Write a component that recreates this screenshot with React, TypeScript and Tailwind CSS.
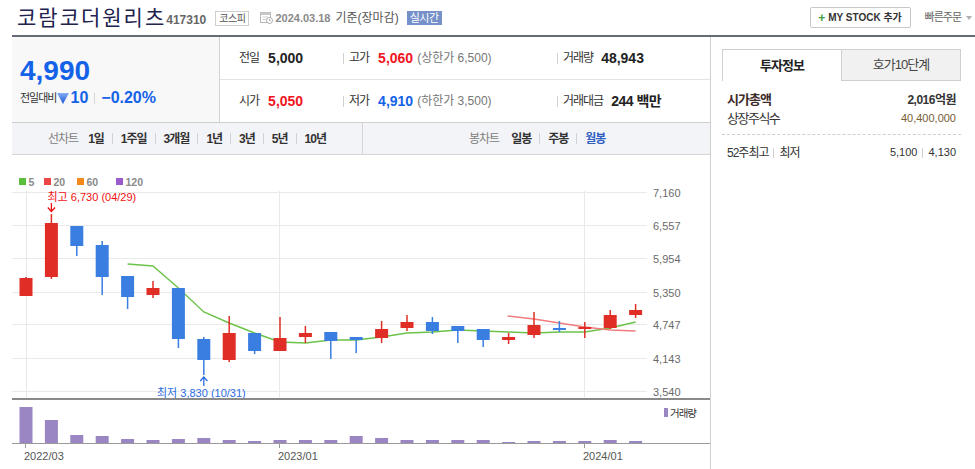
import { Fragment } from 'react';

const candles: [number, number, number, number, boolean][] = [
  // wickTop, bodyTop, bodyBottom, wickBottom, up
  [277, 278, 296, 296, true],
  [214, 223, 277, 279, true],
  [226, 226, 246, 256, false],
  [241, 245, 277, 295, false],
  [276, 276, 297, 309, false],
  [281, 288, 295, 298, true],
  [288, 288, 339, 348, false],
  [337, 339, 360, 375, false],
  [316, 333, 360, 362, true],
  [333, 333, 351, 354, false],
  [317, 338, 351, 351, true],
  [326, 333, 337, 343, true],
  [332, 332, 341, 359, false],
  [337, 337, 340, 353, false],
  [321, 329, 338, 343, true],
  [315, 322, 328, 331, true],
  [317, 322, 331, 334, false],
  [326, 326, 331, 343, false],
  [329, 329, 340, 347, false],
  [333, 337, 340, 344, true],
  [312, 325, 335, 338, true],
  [321, 328, 330, 332, false],
  [322, 327, 329, 338, true],
  [310, 315, 328, 329, true],
  [304, 310, 315, 318, true],
];

const volumes = [407, 420, 435, 436, 439, 440, 439, 438, 440, 441, 440, 440, 440, 436, 438, 440, 440, 440, 440, 442, 441, 441, 441, 440, 441];

const ma5: [number, number][] = [
  [4, 264], [5, 266], [6, 288], [7, 312], [8, 323], [9, 333], [10, 342], [11, 343], [12, 340],
  [13, 340], [14, 337], [15, 333], [16, 332], [17, 330], [18, 331], [19, 332], [20, 333],
  [21, 332], [22, 332], [23, 328], [24, 322],
];

const ma20: [number, number][] = [[19, 316], [20, 319], [21, 323], [22, 327], [23, 330], [24, 331]];

const grid = [192, 225, 258, 292, 324, 358, 391];
const yLabels = ['7,160', '6,557', '5,954', '5,350', '4,747', '4,143', '3,540'];

const cx = (i: number) => 26 + 25.4 * i;

function CalendarIcon() {
  return (
    <svg width="13" height="13" viewBox="0 0 13 13" className="ml-[11px]">
      <rect x="0.5" y="1.5" width="10" height="10" fill="white" stroke="#b8b8b8" />
      <rect x="0.5" y="1.5" width="10" height="2.5" fill="#c8c8c8" />
      <line x1="2.5" y1="6" x2="8" y2="6" stroke="#cfcfcf" />
      <line x1="2.5" y1="8.5" x2="6" y2="8.5" stroke="#cfcfcf" />
      <circle cx="9.5" cy="9.5" r="3" fill="white" stroke="#a8a8a8" />
      <path d="M9.5 8 V9.6 H10.8" stroke="#a8a8a8" fill="none" strokeWidth="0.9" />
    </svg>
  );
}

function Header() {
  return (
    <div className="ml-[12px] h-[37px] border-b-2 border-[#656b74] flex items-center justify-between pl-[5px] pr-[3px]">
      <div className="flex items-center">
        <h1 className="text-[21px] leading-none text-[#22224f] font-normal tracking-[2px]">코람코더원리츠</h1>
        <span className="ml-[0px] mt-[5px] text-[12px] font-bold text-[#666]">417310</span>
        <span className="ml-[9px] mt-[1px] h-[15px] px-[3px] border border-[#cfcfcf] text-[10px] leading-[13px] text-[#555] tracking-[-0.5px]">코스피</span>
        <CalendarIcon />
        <span className="ml-[2px] mt-[1px] text-[11px] font-bold text-[#8a8a8a]">2024.03.18</span>
        <span className="ml-[5px] mt-[1px] text-[12px] text-[#555]">기준(장마감)</span>
        <span className="ml-[8px] mt-[1px] h-[14px] px-[3px] bg-[#7690c9] text-[11px] leading-[14px] text-white tracking-[-0.5px]">실시간</span>
      </div>
      <div className="flex items-center">
        <button className="h-[21px] w-[101px] border border-[#c8c8c8] rounded-[2px] bg-white flex items-center justify-center text-[10px] font-bold text-[#333]">
          <span className="text-[#3ca03c] text-[12px] mr-[3px] leading-none">+</span>
          MY STOCK 추가
        </button>
        <span className="ml-[14px] text-[11px] text-[#666] tracking-[-1px]">빠른주문</span>
        <svg width="6" height="4" viewBox="0 0 6 4" className="ml-[5px]">
          <path d="M0 0 H6 L3 4 Z" fill="#b0b0b0" />
        </svg>
      </div>
    </div>
  );
}

function Sep() {
  return <span className="w-px h-[11px] bg-[#d0d0d0]" />;
}

function Summary() {
  return (
    <div className="h-[86px] flex border-b border-[#cfcfcf]">
      <div className="w-[208px] bg-[#f8f8f8] border-r border-[#d2d2d2] pl-[8px] pt-[19px]">
        <div className="text-[28px] leading-[30px] font-bold text-[#1462e8]">4,990</div>
        <div className="mt-[2px] flex items-center h-[20px]">
          <span className="text-[11px] tracking-[-1px] text-[#333]">전일대비</span>
          <svg width="12" height="12" viewBox="0 0 12 12" className="ml-[1px]">
            <defs>
              <linearGradient id="dn" x1="0" y1="0" x2="0" y2="1">
                <stop offset="0" stopColor="#86aef2" />
                <stop offset="1" stopColor="#1655d8" />
              </linearGradient>
            </defs>
            <path d="M0 1 H12 L6 12 Z" fill="url(#dn)" />
          </svg>
          <span className="ml-[1px] text-[16px] font-bold text-[#1462e8]">10</span>
          <span className="mx-[6px] w-px h-[11px] bg-[#d8d8d8]" />
          <span className="text-[16px] font-bold text-[#1462e8]">−0.20%</span>
        </div>
      </div>
      <div className="flex-1 flex flex-col">
        <div className="h-[43px] flex items-center border-b border-[#e4e4e4]">
          <div className="w-[123px] pl-[19px] flex items-center">
            <span className="text-[12px] tracking-[-1px] text-[#333]">전일</span>
            <span className="ml-[9px] text-[14px] font-bold text-[#222]">5,000</span>
          </div>
          <div className="w-[214px] flex items-center">
            <Sep />
            <span className="ml-[5px] text-[12px] tracking-[-1px] text-[#333]">고가</span>
            <span className="ml-[9px] text-[14px] font-bold text-[#f0141e]">5,060</span>
            <span className="ml-[4px] text-[12px] text-[#777]">(상한가 6,500)</span>
          </div>
          <div className="flex-1 flex items-center">
            <Sep />
            <span className="ml-[5px] text-[12px] tracking-[-1px] text-[#333]">거래량</span>
            <span className="ml-[8px] text-[14px] font-bold text-[#222]">48,943</span>
          </div>
        </div>
        <div className="h-[42px] flex items-center">
          <div className="w-[123px] pl-[19px] flex items-center">
            <span className="text-[12px] tracking-[-1px] text-[#333]">시가</span>
            <span className="ml-[9px] text-[14px] font-bold text-[#f0141e]">5,050</span>
          </div>
          <div className="w-[214px] flex items-center">
            <Sep />
            <span className="ml-[5px] text-[12px] tracking-[-1px] text-[#333]">저가</span>
            <span className="ml-[9px] text-[14px] font-bold text-[#1462e8]">4,910</span>
            <span className="ml-[4px] text-[12px] text-[#777]">(하한가 3,500)</span>
          </div>
          <div className="flex-1 flex items-center">
            <Sep />
            <span className="ml-[5px] text-[12px] tracking-[-1px] text-[#333]">거래대금</span>
            <span className="ml-[8px] text-[14px] font-bold text-[#222] tracking-[-0.5px]">244 백만</span>
          </div>
        </div>
      </div>
    </div>
  );
}

function TabRow() {
  const lines = ['1일', '1주일', '3개월', '1년', '3년', '5년', '10년'];
  const bongs = ['일봉', '주봉', '월봉'];
  return (
    <div className="h-[32px] flex bg-[#f3f4f7] border-b border-[#d5d5d5] text-[12px]">
      <div className="w-[351px] border-r border-[#d5d5d5] flex items-center pl-[36px]">
        <span className="text-[#808080] tracking-[-1px] mr-[10px]">선차트</span>
        {lines.map((t, i) => (
          <Fragment key={t}>
            {i > 0 && <span className="mx-[8px] w-px h-[11px] bg-[#d3d3d3]" />}
            <span className="font-bold text-[#333] tracking-[-1px]">{t}</span>
          </Fragment>
        ))}
      </div>
      <div className="flex-1 flex items-center pl-[106px]">
        <span className="text-[#808080] tracking-[-1px] mr-[12px]">봉차트</span>
        {bongs.map((t, i) => (
          <Fragment key={t}>
            {i > 0 && <span className="mx-[8px] w-px h-[11px] bg-[#d3d3d3]" />}
            <span className={i === 2 ? 'font-bold text-[#2f5fbf] tracking-[-1px]' : 'font-bold text-[#333] tracking-[-1px]'}>{t}</span>
          </Fragment>
        ))}
      </div>
    </div>
  );
}

function Chart() {
  const legend = [
    { x: 19, c: '#5cbf3c', t: '5' },
    { x: 44, c: '#ee4646', t: '20' },
    { x: 77, c: '#f4891b', t: '60' },
    { x: 116, c: '#9a5ccc', t: '120' },
  ];
  return (
    <svg width="698" height="314" viewBox="12 155 698 314" className="block">
      {legend.map((l) => (
        <g key={l.t}>
          <rect x={l.x} y={178} width={7} height={7} fill={l.c} />
          <text x={l.x + 9.5} y={182} fontSize="10.5" fontWeight="bold" fill="#8a8a8a" dominantBaseline="central">{l.t}</text>
        </g>
      ))}

      {grid.map((g, i) => (
        <g key={g}>
          <line x1={12} x2={647} y1={g + 0.5} y2={g + 0.5} stroke="#e9e9e9" />
          <text x={653} y={g + 0.5} fontSize="11" fill="#6a6a6a" dominantBaseline="central">{yLabels[i]}</text>
        </g>
      ))}
      {[26, 279, 584].map((x) => (
        <line key={x} x1={x + 0.5} x2={x + 0.5} y1={191} y2={398} stroke="#e9e9e9" />
      ))}

      <polyline points={ma5.map(([i, y]) => `${cx(i)},${y}`).join(' ')} fill="none" stroke="#6cc24a" strokeWidth="1.4" />
      <polyline points={ma20.map(([i, y]) => `${cx(i) - (i === 19 ? 1 : 0)},${y}`).join(' ')} fill="none" stroke="#f27d7d" strokeWidth="1.4" />

      {candles.map(([wt, bt, bb, wb, up], i) => {
        const x = cx(i);
        const c = up ? '#e02e26' : '#3a7ee2';
        return (
          <g key={i}>
            <line x1={x} x2={x} y1={wt} y2={wb} stroke={c} strokeWidth="1.5" />
            <rect x={x - 6.5} y={bt} width={13} height={Math.max(bb - bt, 2)} fill={c} />
          </g>
        );
      })}

      <text x={47.5} y={197} fontSize="11" fill="#f01010" dominantBaseline="central">최고 6,730 (04/29)</text>
      <line x1={51.4} x2={51.4} y1={203} y2={211.5} stroke="#f01010" strokeWidth="1.3" />
      <polyline points="47.8,207.5 51.4,211.5 55,207.5" fill="none" stroke="#f01010" strokeWidth="1.3" />

      <text x={157} y={393} fontSize="11" fill="#2a6ce0" dominantBaseline="central">최저 3,830 (10/31)</text>
      <line x1={203.8} x2={203.8} y1={377} y2={386} stroke="#2a6ce0" strokeWidth="1.3" />
      <polyline points="200.2,381 203.8,377 207.4,381" fill="none" stroke="#2a6ce0" strokeWidth="1.3" />

      <rect x={12} y={398} width={698} height={2} fill="#8a8a8a" />

      {volumes.map((t, i) => (
        <rect key={i} x={cx(i) - 6.5} y={t} width={13} height={443 - t} fill="#9b86c4" />
      ))}
      <rect x={664} y={408} width={4} height={9} fill="#9b86c4" />
      <text x={670} y={412.5} fontSize="10.5" fill="#333" letterSpacing="-1" dominantBaseline="central">거래량</text>

      <line x1={12} x2={710} y1={443.5} y2={443.5} stroke="#9a9a9a" />
      {[
        { x: 25, t: '2022/03' },
        { x: 279, t: '2023/01' },
        { x: 584, t: '2024/01' },
      ].map((l) => (
        <g key={l.t}>
          <line x1={l.x + 0.5} x2={l.x + 0.5} y1={443} y2={448} stroke="#9a9a9a" />
          <text x={l.x - 1} y={456} fontSize="11" fill="#555" dominantBaseline="central">{l.t}</text>
        </g>
      ))}
    </svg>
  );
}

function SidePanel() {
  return (
    <div className="flex-1 pl-[11px] pr-[14px] pt-[12px]">
      <div className="flex h-[32px] text-[13px]">
        <div className="w-[120px] border border-b-0 border-[#cfcfcf] bg-white flex items-center justify-center font-bold text-[#222] tracking-[-1px]">투자정보</div>
        <div className="flex-1 border border-l-0 border-[#cfcfcf] bg-[#f1f1f1] flex items-center justify-center text-[#444] tracking-[-1px]">호가10단계</div>
      </div>
      <div className="px-[5px] mt-[9px]">
        <div className="h-[19px] flex items-center justify-between">
          <span className="text-[13px] font-bold text-[#402a2a] tracking-[-1px]">시가총액</span>
          <span className="text-[12px] font-bold text-[#333] tracking-[-0.5px]">2,016억원</span>
        </div>
        <div className="h-[19px] flex items-center justify-between">
          <span className="text-[13px] text-[#333] tracking-[-1.5px]">상장주식수</span>
          <span className="text-[11px] text-[#765d33]">40,400,000</span>
        </div>
      </div>
      <div className="mt-[6px] border-t border-dashed border-[#d0d0d0]" />
      <div className="px-[5px] mt-[8px] h-[19px] flex items-center justify-between">
        <span className="flex items-center text-[12px] text-[#333] tracking-[-1px]">
          52주최고
          <span className="mx-[5px] w-px h-[10px] bg-[#d0d0d0]" />
          최저
        </span>
        <span className="flex items-center text-[11px] text-[#333]">
          5,100
          <span className="mx-[5px] w-px h-[10px] bg-[#d0d0d0]" />
          4,130
        </span>
      </div>
    </div>
  );
}

export default function App() {
  return (
    <div className="w-[975px] h-[469px] overflow-hidden bg-white font-['Liberation_Sans','Noto_Sans_CJK_KR',sans-serif] text-[#333]">
      <Header />
      <div className="ml-[12px] flex h-[432px]">
        <div className="w-[699px] border-r border-[#cfcfcf] flex flex-col">
          <Summary />
          <TabRow />
          <Chart />
        </div>
        <SidePanel />
      </div>
    </div>
  );
}
